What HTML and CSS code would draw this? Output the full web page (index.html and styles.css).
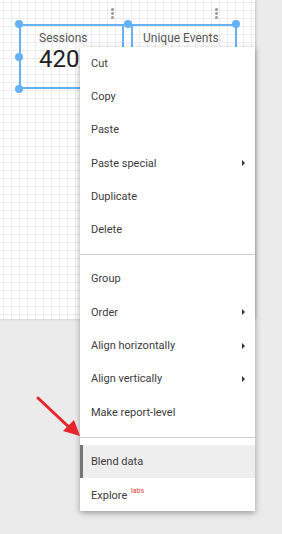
FILE: index.html
```
<html>

<head>
	<link rel="stylesheet" href="styles.css">
</head>

<body>
	<div id="canvas">
		<div class="chart chart-1">
			<div class="chart-label">Sessions</div>
			<div class="chart-value">420<span class="chart-rest">,</span></div>
			<div class="kebab"><i></i><i></i><i></i></div>
		</div>
		<div class="chart chart-2">
			<div class="chart-label">Unique Events</div>
			<div class="kebab"><i></i><i></i><i></i></div>
		</div>
		<span class="handle" style="left: 19px; top: 24px"></span>
		<span class="handle" style="left: 128px; top: 24px"></span>
		<span class="handle" style="left: 236px; top: 24px"></span>
		<span class="handle" style="left: 19px; top: 57px"></span>
		<span class="handle" style="left: 19px; top: 89px"></span>
	</div>

	<div id="context-menu">
		<div class="menu-item">Cut</div>
		<div class="menu-item">Copy</div>
		<div class="menu-item">Paste</div>
		<div class="menu-item">Paste special <span class="sub-arrow"></span></div>
		<div class="menu-item">Duplicate</div>
		<div class="menu-item">Delete</div>
		<div class="menu-divider"></div>
		<div class="menu-item">Group</div>
		<div class="menu-item">Order <span class="sub-arrow"></span></div>
		<div class="menu-item">Align horizontally <span class="sub-arrow"></span></div>
		<div class="menu-item">Align vertically <span class="sub-arrow"></span></div>
		<div class="menu-item">Make report-level</div>
		<div class="menu-divider"></div>
		<div class="menu-item active">Blend data</div>
		<div class="menu-item">
			<span>Explore <sup class="labs">labs</sup></span>
		</div>
	</div>

	<svg id="pointer-arrow" width="90" height="60" viewBox="0 0 90 60">
		<line x1="38" y1="398" x2="72" y2="430" transform="translate(0,-390)" stroke="#e8232a" stroke-width="3" stroke-linecap="round" />
		<polygon points="80,436 63,431 74,420" transform="translate(0,-390)" fill="#e8232a" />
	</svg>
</body>

</html>
```

FILE: styles.css
```
body {
	margin: 0;
	background: #ebebeb;
	font-family: Roboto, "Liberation Sans", sans-serif;
	width: 282px;
	height: 534px;
	position: relative;
	overflow: hidden;
}

#canvas {
	position: relative;
	width: 255px;
	height: 319px;
	background-color: #fff;
	background-image:
		linear-gradient(to right, #ececec 1px, transparent 1px),
		linear-gradient(to bottom, #ececec 1px, transparent 1px);
	background-size: 8px 8px;
	background-position: 3px 2px;
	box-shadow: 1px 0 3px rgba(0, 0, 0, 0.18);
}

.chart {
	position: absolute;
	top: 24px;
	height: 65px;
	border: 2px solid #64b1f5;
	box-sizing: border-box;
}

.chart-1 {
	left: 19px;
	width: 105px;
}

.chart-2 {
	left: 131px;
	width: 106px;
}

.chart-label {
	font-size: 12px;
	color: #555;
	margin: 5px 0 0 18px;
	line-height: 14px;
}

.chart-2 .chart-label {
	margin-left: 10px;
}

.chart-value {
	font-size: 24px;
	color: #222;
	margin: 3px 0 0 18px;
	line-height: 22px;
}

.chart-rest {
	font-size: 11px;
}

.kebab {
	position: absolute;
	top: -18px;
	right: 8px;
	display: flex;
	flex-direction: column;
	gap: 1.5px;
}

.chart-2 .kebab {
	right: 17px;
}

.kebab i {
	width: 3px;
	height: 2.5px;
	border-radius: 50%;
	background: #9e9e9e;
}

.handle {
	position: absolute;
	width: 8px;
	height: 8px;
	margin: -4px 0 0 -4px;
	border-radius: 50%;
	background: #64b1f5;
}

#context-menu {
	position: absolute;
	left: 80px;
	top: 46.5px;
	width: 175px;
	background: #fff;
	box-shadow: 0 2px 6px rgba(0, 0, 0, 0.35);
}

.menu-item {
	display: flex;
	align-items: center;
	justify-content: space-between;
	height: 33.3px;
	padding: 0 10px 0 11px;
	font-size: 11px;
	color: #3c3c3c;
	box-sizing: border-box;
}

.menu-item.active {
	background: #eeeeee;
	border-left: 3px solid #757575;
	padding-left: 8px;
}

.sub-arrow {
	width: 0;
	height: 0;
	border-top: 3px solid transparent;
	border-bottom: 3px solid transparent;
	border-left: 3px solid #333;
}

.labs {
	color: #e53935;
	font-size: 7px;
	vertical-align: 6px;
	margin-left: 1px;
}

.menu-divider {
	height: 1px;
	background: #cfcfcf;
	margin: 8px 0 7px;
}

#pointer-arrow {
	position: absolute;
	left: 0;
	top: 390px;
}
```
